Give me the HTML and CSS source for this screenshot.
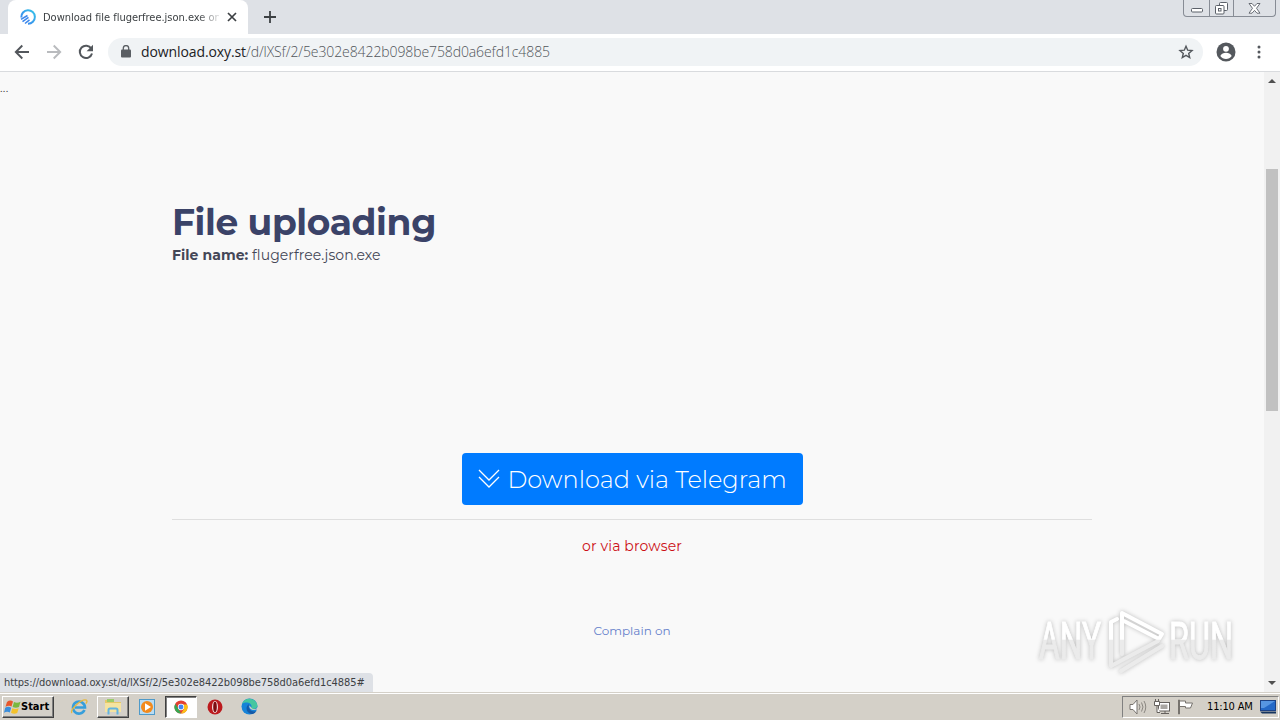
FILE: index.html
```
<!DOCTYPE html>
<html lang="en">
<head>
    <meta charset="UTF-8">
    <title>Download file flugerfree.json.exe</title>
    <link rel="stylesheet" href="styles.css">
</head>
<body>
    <header class="tab-strip">
        <div class="tab">
            <svg class="favicon" width="16" height="16" viewBox="0 0 16 16">
                <defs>
                    <linearGradient id="fav" x1="0" y1="1" x2="1" y2="0">
                        <stop offset="0" stop-color="#3b7cf0"/>
                        <stop offset="1" stop-color="#35c3e8"/>
                    </linearGradient>
                </defs>
                <path d="M1.300 8.500A6.800 6.800 0 1 1 8 14.800" fill="none" stroke="url(#fav)" stroke-width="2"/>
                <path d="M1 10.400 7.500 6.500M2.500 12.600l6-4.200M5 14.500l4.500-3.600" fill="none" stroke="#3c87ec" stroke-width="1.600"/>
            </svg>
            <span class="tab-title">Download file flugerfree.json.exe on</span>
            <svg class="tab-close" width="10" height="10" viewBox="0 0 10 10"><path d="M1 1l8 8M9 1l-8 8" stroke="#3c4043" stroke-width="1.7"/></svg>
        </div>
        <svg class="new-tab" width="12" height="12" viewBox="0 0 12 12"><path d="M6 0v12M0 6h12" stroke="#3c4043" stroke-width="1.8"/></svg>
        <div class="window-buttons">
            <span class="win-min"><svg width="12" height="5" viewBox="0 0 12 5"><rect x=".5" y=".5" width="11" height="3.5" rx="1" fill="#fff" stroke="#5b6069"/></svg></span>
            <span class="win-max"><svg width="13" height="13" viewBox="0 0 13 13" fill="#fff" stroke="#5b6069"><rect x="4.500" y=".5" width="8" height="8" rx="1"/><rect x=".5" y="3.500" width="8.500" height="8.500" rx="1"/><rect x="3.500" y="6.500" width="2.500" height="2.500"/></svg></span>
            <span class="win-close"><svg width="13" height="11" viewBox="0 0 13 11"><path d="M1 .5h3l2.500 2.800L9 .5h3L8.500 5.300l3.500 4.900H9L6.500 7.400 4 10.200H1l3.500-4.900z" fill="#fff" stroke="#5b6069" stroke-width=".9"/></svg></span>
        </div>
    </header>

    <nav class="toolbar">
        <svg class="nav-icon" width="16" height="16" viewBox="0 0 16 16"><path d="M15 8H2M8.300 1.500 1.800 8l6.500 6.500" fill="none" stroke="#53575c" stroke-width="1.9"/></svg>
        <svg class="nav-icon" width="16" height="16" viewBox="0 0 16 16"><path d="M1 8h13M7.700 1.500 14.200 8l-6.500 6.500" fill="none" stroke="#b9bbbe" stroke-width="1.9"/></svg>
        <svg class="nav-icon" width="16" height="16" viewBox="0 0 16 16"><path d="M13.300 4.600A6.200 6.200 0 1 0 14 9.500" fill="none" stroke="#53575c" stroke-width="2"/><path d="M15 .8v6.400H8.600z" fill="#53575c"/></svg>
        <div class="address-bar">
            <svg width="10" height="13" viewBox="0 0 10 13"><rect y="4.500" width="10" height="8" rx="1" fill="#5a5e63"/><path d="M2.300 5V3.300a2.700 2.700 0 0 1 5.400 0V5" fill="none" stroke="#5a5e63" stroke-width="1.300"/></svg>
            <span class="url"><span class="host">download.oxy.st</span>/d/lXSf/2/5e302e8422b098be758d0a6efd1c4885</span>
            <svg class="star" width="16" height="16" viewBox="0 0 16 16"><path d="M8 2.200l1.700 4 4.300.4-3.300 2.800 1 4.200L8 11.400l-3.700 2.200 1-4.200L2 6.600l4.300-.4z" fill="none" stroke="#53575c" stroke-width="1.400"/></svg>
        </div>
        <svg class="profile" width="20" height="20" viewBox="0 0 20 20"><circle cx="10" cy="10" r="9.500" fill="#54585d"/><circle cx="10" cy="6.800" r="2.900" fill="#fff"/><path d="M4.300 14c1-2.300 3.400-3.200 5.700-3.200s4.700.9 5.700 3.200c-1.300 1.900-3.400 3-5.700 3s-4.400-1.100-5.700-3z" fill="#fff"/></svg>
        <svg class="menu" width="4" height="14" viewBox="0 0 4 14" fill="#54585d"><circle cx="2" cy="2" r="1.500"/><circle cx="2" cy="7" r="1.500"/><circle cx="2" cy="12" r="1.500"/></svg>
    </nav>

    <div class="viewport">
        <main class="page">
            <div class="dots">...</div>
            <div class="container">
                <h1>File uploading</h1>
                <p class="file-name"><b>File name:</b> <span>flugerfree.json.exe</span></p>
                <a class="btn" href="#">
                    <svg width="22" height="20" viewBox="0 0 22 20"><path d="M1 1l10 10L21 1M1 8l10 10L21 8" fill="none" stroke="#fff" stroke-width="1.300"/></svg>
                    <span>Download via Telegram</span>
                </a>
                <hr>
                <p class="via-browser">or via browser</p>
                <a class="complain" href="#">Complain on</a>
            </div>
        </main>
        <div class="scrollbar">
            <svg width="8" height="4" viewBox="0 0 8 4"><path d="M0 4l4-4 4 4z" fill="#505050"/></svg>
            <div class="thumb"></div>
            <svg class="arrow-down" width="8" height="4" viewBox="0 0 8 4"><path d="M0 0l4 4 4-4z" fill="#505050"/></svg>
        </div>
        <div class="status"><span>https://download.oxy.st/d/lXSf/2/5e302e8422b098be758d0a6efd1c4885#</span></div>
        <svg class="watermark" width="216" height="76" viewBox="0 0 216 76">
            <defs>
                <linearGradient id="wm" x1="0" y1="0" x2="0" y2="72" gradientUnits="userSpaceOnUse">
                    <stop offset=".49" stop-color="#fff"/>
                    <stop offset=".5" stop-color="#ebebeb"/>
                </linearGradient>
            </defs>
            <g fill="url(#wm)" stroke="url(#wm)">
                <text x="5" y="55" textLength="62" lengthAdjust="spacingAndGlyphs">ANY</text>
                <text x="135" y="55" textLength="64" lengthAdjust="spacingAndGlyphs">RUN</text>
            </g>
            <g fill="none" stroke="url(#wm)" stroke-width="4" stroke-linejoin="round" stroke-linecap="round">
                <path d="M88 50V9l40 21-3 5-35-18"/>
                <path d="M83 15l-6 3v44l47-25"/>
                <path d="M87 67l41-25"/>
            </g>
        </svg>
    </div>

    <footer class="taskbar">
        <div class="start">
            <svg width="17" height="16" viewBox="0 0 17 16"><path d="M3 3q3-2.500 6-.5L7.500 7.500Q5 6 1.500 7.800z" fill="#e8572b"/><path d="M10 3q3 1.500 6.500-.2L15 8q-3 1.500-6.400 0z" fill="#7ab83f"/><path d="M1.200 8.800Q4 7 7.200 8.700L5.800 13.500Q3 12 0 13.700z" fill="#3b8edb"/><path d="M8.300 9.200q3 1.500 6.400 0L13.200 14q-3 1.500-6.200-.2z" fill="#f4c22b"/></svg>
            <span>Start</span>
        </div>
        <div class="task">
            <svg width="18" height="18" viewBox="0 0 18 18"><path d="M14.500 12A6 6 0 1 1 15 9.500H5" fill="none" stroke="#369edb" stroke-width="2.600"/><path d="M2 15C-1 12 12 0 16.500 2.200c1 .8.300 2.300-.7 3.500" fill="none" stroke="#e7b83e" stroke-width="1.300"/></svg>
        </div>
        <div class="task raised">
            <svg width="18" height="17" viewBox="0 0 18 17"><path d="M1 2h6l1 2h9v10H1z" fill="#e6c867"/><path d="M3 1h7v3H3z" fill="#9bcb6b"/><path d="M1 5h16v9H1z" fill="#f5e3a0"/><path d="M4.500 16.500V12q0-1.500 1.500-1.500h6q1.500 0 1.500 1.500v4.500" fill="none" stroke="#63b4df" stroke-width="2"/></svg>
        </div>
        <div class="task">
            <svg width="16" height="16" viewBox="0 0 16 16"><rect x=".5" y=".5" width="15" height="15" fill="#b9dcf3" stroke="#4f9ac9"/><circle cx="8" cy="8" r="6" fill="#f28a1d"/><path d="M6 4.200v7.600L12 8z" fill="#fff"/></svg>
        </div>
        <div class="task pressed">
            <svg width="14" height="14" viewBox="0 0 16 16"><circle cx="8" cy="8" r="7.500" fill="#e34133"/><path d="M1.500 4.200 5 10l3 5.500A7.500 7.500 0 0 1 1.500 4.200z" fill="#35a853"/><path d="M15 5H8l3.500 5L8 15.500A7.500 7.500 0 0 0 15 5z" fill="#fbc116"/><circle cx="8" cy="8" r="3.600" fill="#fff"/><circle cx="8" cy="8" r="2.800" fill="#4285f4"/></svg>
        </div>
        <div class="task">
            <svg width="16" height="16" viewBox="0 0 16 16"><circle cx="8" cy="8" r="7.500" fill="#bc1a1e"/><ellipse cx="8" cy="8" rx="3" ry="6" fill="#f4dede"/><ellipse cx="8" cy="8" rx="1.800" ry="5.200" fill="#7d0c10"/></svg>
        </div>
        <div class="task">
            <svg width="17" height="17" viewBox="0 0 17 17"><circle cx="8.500" cy="8.500" r="8" fill="#1683d8"/><path d="M1 6C3 0 11-1 15 4c3 4 1 7-3 7-2 0-2.500-1-1.500-2C11 5 5 3 1 6z" fill="#45c6a0"/><path d="M8 6c-4 3-3 8 2 10 2.500 0 4.500-1.500 5.500-3-5 2-9-2-7.500-7z" fill="#1559a7"/><path d="M8.500 7.500C7.500 10.500 11 13 15.500 11.500l1.500 1V9c-1 2-4 3-6 1.500z" fill="#d5cfc7"/></svg>
        </div>
        <div class="tray">
            <svg width="18" height="16" viewBox="0 0 18 16" fill="#fff" stroke="#77736e"><path d="M1 5.500h3L8 1v14l-4-4.500H1z"/><path d="M10 5q2 3 0 6M12.500 3.500q3 4.500 0 9M15 2q3.500 6 0 12" fill="none" stroke-width=".8"/></svg>
            <svg width="16" height="16" viewBox="0 0 16 16" fill="#fff" stroke="#65615d"><rect x="4.500" y="3.500" width="11" height="8.500"/><rect x="6.500" y="5.500" width="7" height="4.500" fill="#a9a6a2" stroke="none"/><path d="M7 14.500h8M11 12v2M.5 2.500h5v4h-5zM1.500 0v2M4.500 0v2M3 7v6.500h3"/></svg>
            <svg width="17" height="16" viewBox="0 0 17 16" fill="#fff" stroke="#77736e"><path d="M1.500 1h1v14h-1zM2.500 2h6v2h7l-2 5H8.500V7.500h-6z"/></svg>
            <time>11:10 AM</time>
            <svg width="16" height="14" viewBox="0 0 16 14"><rect x=".5" y=".5" width="15" height="10" fill="#2569c7" stroke="#1d4285"/><path d="M1 1h14L4 8H1z" fill="#5796e2"/><path d="M0 11.500h16v2H2z" fill="#16355f"/></svg>
        </div>
    </footer>
</body>
</html>
```
FILE: styles.css
```
* {
    box-sizing: border-box;
}

body {
    margin: 0;
    width: 1280px;
    height: 720px;
    overflow: hidden;
    display: flex;
    flex-direction: column;
    font-family: "DejaVu Sans Condensed", "DejaVu Sans", sans-serif;
    font-size: 11px;
}

svg {
    display: block;
    flex-shrink: 0;
}

.tab-strip {
    display: flex;
    height: 34px;
    background-color: #dee1e6;
    padding-left: 8px;
}

.tab {
    display: flex;
    align-items: center;
    width: 240px;
    padding: 0 11px 0 12px;
    background-color: white;
    border-radius: 8px 8px 0 0;
}

.tab-title {
    width: 176px;
    margin: 0 8px 0 7px;
    white-space: nowrap;
    color: #3c4043;
    letter-spacing: -0.02px;
    -webkit-mask-image: linear-gradient(to right, black 155px, transparent 180px);
}

.new-tab {
    margin: 11px 0 0 16px;
}

.window-buttons {
    display: flex;
    width: 93px;
    height: 17px;
    margin-left: auto;
    margin-right: 4px;
    border: 1px solid #878c95;
    border-top: none;
    border-radius: 0 0 4px 4px;
}

.window-buttons span {
    display: flex;
    justify-content: center;
    align-items: center;
    width: 25px;
}

.window-buttons .win-min {
    padding-top: 4px;
}

.window-buttons .win-max {
    border: solid #878c95;
    border-width: 0 1px;
}

.window-buttons .win-close {
    width: 41px;
}

.toolbar {
    display: flex;
    align-items: center;
    height: 38px;
    padding: 0 19px 2px 14px;
    background-color: white;
    border-bottom: 1px solid #d9dbde;
}

.nav-icon {
    margin-right: 16px;
}

.address-bar {
    display: flex;
    align-items: center;
    width: 1095px;
    height: 28px;
    margin-left: -2px;
    padding: 0 9px 0 13px;
    background-color: #f0f3f5;
    border-radius: 14px;
}

.url {
    margin-left: 10px;
    font-family: "Open Sans", sans-serif;
    font-size: 14px;
    font-weight: 300;
    letter-spacing: -0.1px;
    color: #50555a;
}

.host {
    font-weight: 400;
    color: #202124;
}

.star {
    margin-left: auto;
}

.profile {
    margin-left: 13px;
}

.menu {
    margin-left: auto;
}

.viewport {
    position: relative;
    display: flex;
    height: 620px;
    background-color: #f9f9f9;
}

.page {
    width: 1264px;
    font-family: "Montserrat", "Inter", sans-serif;
}

.dots {
    height: 128px;
    padding-top: 8px;
    font-size: 12px;
    letter-spacing: 0.3px;
    color: #444;
}

.container {
    display: flex;
    flex-direction: column;
    align-items: center;
    width: 920px;
    margin: 0 auto;
}

h1 {
    align-self: flex-start;
    margin: 0;
    font-size: 36px;
    line-height: 44px;
    letter-spacing: -0.4px;
    color: #3b4368;
}

.file-name {
    align-self: flex-start;
    margin: 0 0 187px;
    font-size: 14px;
    line-height: 22px;
    letter-spacing: 0.06px;
    color: #444757;
}

.btn {
    display: flex;
    align-items: center;
    width: 341px;
    height: 52px;
    padding-left: 16px;
    background-color: #007bff;
    border-radius: 4px;
    color: white;
    font-size: 24px;
    font-weight: 300;
    white-space: nowrap;
    text-decoration: none;
}

.btn span {
    margin-left: 8px;
}

hr {
    width: 100%;
    margin: 14px 0;
    border: 0;
    border-top: 1px solid #dfdfdf;
}

.via-browser {
    margin: 0;
    font-size: 14px;
    line-height: 24px;
    letter-spacing: 0.15px;
    color: #cc1016;
}

.complain {
    margin-top: 63px;
    font-size: 12px;
    line-height: 20px;
    color: #6680cb;
    text-decoration: none;
}

.scrollbar {
    display: flex;
    flex-direction: column;
    align-items: center;
    width: 16px;
    padding: 7px 0;
    background-color: #f1f1f1;
}

.thumb {
    width: 12px;
    height: 242px;
    margin-top: 86px;
    background-color: #c1c1c1;
}

.arrow-down {
    margin-top: auto;
}

.status {
    position: absolute;
    left: 0;
    bottom: 0;
    width: 373px;
    height: 19px;
    padding-left: 4px;
    line-height: 20px;
    background-color: #dee1e6;
    border-top-right-radius: 4px;
    color: #3c4043;
    white-space: nowrap;
    letter-spacing: -0.06px;
}

.watermark {
    position: absolute;
    left: 1034px;
    top: 532px;
    font-family: Roboto, sans-serif;
    font-size: 51px;
    filter: drop-shadow(0 0 2px #bbb);
}

.taskbar {
    display: flex;
    align-items: center;
    height: 28px;
    padding-left: 2px;
    background-color: #d4d0c8;
    border-top: 1px solid #d4d0c8;
    box-shadow: inset 0 1px white;
}

.start {
    display: flex;
    align-items: center;
    width: 52px;
    height: 22px;
    margin-right: 9px;
    padding-left: 1px;
    font-weight: bold;
}

.start,
.raised {
    border: 1px solid;
    border-color: white #404040 #404040 white;
    box-shadow: inset -1px -1px #808080;
}

.task {
    display: flex;
    justify-content: center;
    align-items: center;
    width: 32px;
    height: 22px;
    margin-right: 2px;
}

.pressed {
    background-color: white;
    border: 1px solid;
    border-color: #404040 white white #404040;
    box-shadow: inset 1px 1px #808080;
}

.tray {
    display: flex;
    align-items: center;
    width: 157px;
    height: 22px;
    margin-left: auto;
    margin-right: 1px;
    padding-left: 6px;
    border: 1px solid;
    border-color: #808080 white white #808080;
}

.tray svg {
    margin-right: 7px;
}

.tray time {
    width: 47px;
    margin-left: 6px;
    margin-right: 7px;
    white-space: nowrap;
    letter-spacing: -0.15px;
}
```
